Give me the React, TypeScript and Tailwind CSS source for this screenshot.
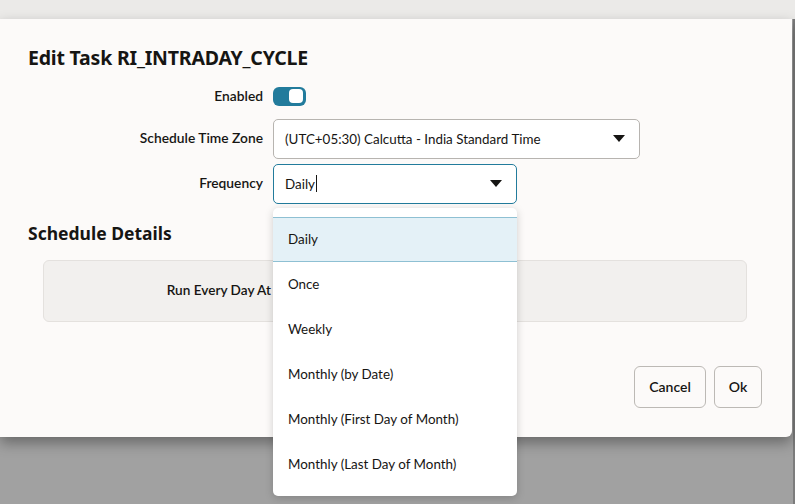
import { useState } from 'react'

const OPTIONS = [
  'Daily',
  'Once',
  'Weekly',
  'Monthly (by Date)',
  'Monthly (First Day of Month)',
  'Monthly (Last Day of Month)',
]

function Caret() {
  return (
    <svg width="12" height="7" viewBox="0 0 12 7" className="shrink-0">
      <path d="M0 0h12L6 7z" fill="#161513" />
    </svg>
  )
}

function FieldRow({ label, children }: { label: string; children: React.ReactNode }) {
  return (
    <div className="flex items-center">
      <div className="w-[263px] text-right text-[13.8px] font-semibold text-[#161513]">{label}</div>
      <div className="ml-[10px]">{children}</div>
    </div>
  )
}

export default function App() {
  const [enabled, setEnabled] = useState(true)
  const [freq, setFreq] = useState('Daily')

  return (
    <div
      className="relative w-[795px] h-[504px] overflow-hidden bg-[#a1a1a1] text-[#161513]"
      style={{ fontFamily: 'Lato, "Noto Sans", Arial, sans-serif' }}
    >
      {/* 背景页顶部 */}
      <div className="h-[19px] w-full bg-[#ebeae8]" />

      <div className="flex">
        {/* 弹窗 */}
        <div className="relative w-[792px] h-[418px] bg-[#fcfaf9] rounded-br-[6px] shadow-[0_6px_14px_rgba(0,0,0,0.35)]">
          <div className="pl-[28px] pt-[27px] text-[19.5px] font-bold leading-[24px] tracking-[-0.2px] font-['Noto_Sans',sans-serif]">
            Edit Task RI_INTRADAY_CYCLE
          </div>

          <div className="mt-[16px] flex flex-col">
            <FieldRow label="Enabled">
              <button
                onClick={() => setEnabled(e => !e)}
                className={`flex h-[19px] w-[33px] items-center rounded-[6px] px-[3px] ${
                  enabled ? 'justify-end bg-[#227b9c]' : 'justify-start bg-[#8d8a86]'
                }`}
              >
                <span className="h-[14px] w-[14px] rounded-[4px] bg-white" />
              </button>
            </FieldRow>

            <div className="mt-[12px]">
              <FieldRow label="Schedule Time Zone">
                <div className="flex h-[40px] w-[367px] items-center justify-between rounded-[5px] border border-[#b7b4b0] bg-white pl-[11px] pr-[14px] text-[13.4px]">
                  <span>(UTC+05:30) Calcutta - India Standard Time</span>
                  <Caret />
                </div>
              </FieldRow>
            </div>

            <div className="mt-[5px]">
              <FieldRow label="Frequency">
                <div className="flex h-[40px] w-[244px] items-center justify-between rounded-[5px] border-[1.5px] border-[#227b9c] bg-white pl-[11px] pr-[14px] text-[13.4px]">
                  <span className="flex items-center">
                    {freq}
                    <span className="ml-px inline-block h-[17px] w-px bg-[#161513]" />
                  </span>
                  <Caret />
                </div>
              </FieldRow>
            </div>
          </div>

          <div className="pl-[28px] mt-[17px] text-[17.5px] font-bold leading-[24px] font-['Noto_Sans',sans-serif]">
            Schedule Details
          </div>

          <div className="ml-[43px] mt-[15px] flex h-[62px] w-[704px] items-center rounded-[6px] border border-[#e4e1de] bg-[#f2f0ee]">
            <div className="w-[227px] text-right text-[13.6px] font-semibold">Run Every Day At</div>
          </div>

          <div className="mt-[44px] flex justify-end gap-[8px] pr-[30px]">
            <button className="h-[42px] w-[72px] rounded-[6px] border border-[#bcb9b5] bg-[#fcfaf9] text-[14px] font-semibold">
              Cancel
            </button>
            <button className="h-[42px] w-[48px] rounded-[6px] border border-[#bcb9b5] bg-[#fcfaf9] text-[14px] font-semibold">
              Ok
            </button>
          </div>
        </div>
        <div className="w-px" />
        <div className="w-[2px] h-[504px] bg-[#7c7c7c]" />
      </div>

      {/* 下拉列表 */}
      <div className="absolute left-[273px] top-[208px] w-[244px] h-[288px] rounded-[5px] bg-white pt-[9px] shadow-[0_2px_8px_rgba(0,0,0,0.18)]">
        {OPTIONS.map(o => (
          <div
            key={o}
            onClick={() => setFreq(o)}
            className={`flex h-[45px] items-center pl-[15px] text-[13.4px] ${
              o === freq ? 'border-y-[1.5px] border-[#8ec0d3] bg-[#e4f1f7]' : ''
            }`}
          >
            {o}
          </div>
        ))}
      </div>
    </div>
  )
}
